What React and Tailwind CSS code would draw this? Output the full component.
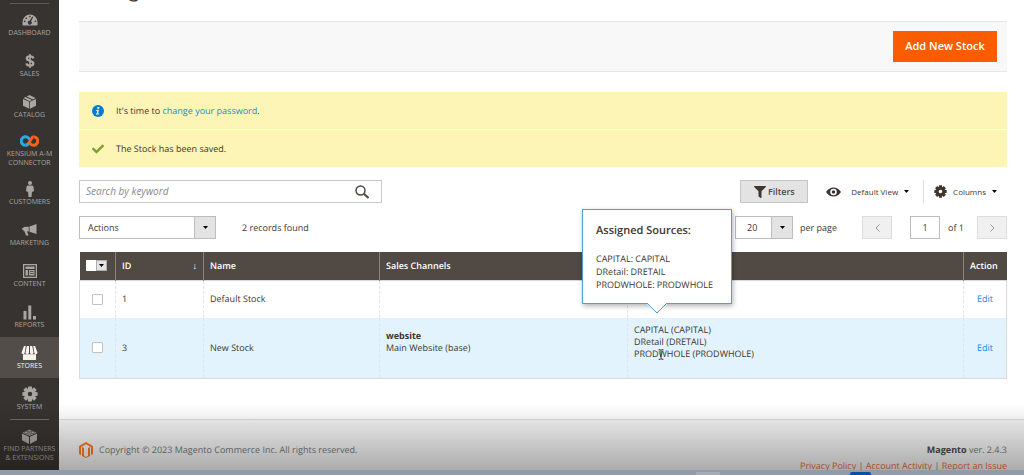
import { useState } from "react"
import { FaFilter, FaCheck } from "react-icons/fa"

const TEETH = [0, 45, 90, 135, 180, 225, 270, 315]

const Gear = ({ className }) => (
  <svg viewBox="0 0 20 20" className={className} fill="currentColor" aria-hidden="true">
    {TEETH.map((deg) => (
      <path key={deg} d="M7.700 0.500h4.600l.5 5.500h-5.600z" transform={`rotate(${deg} 10 10)`} />
    ))}
    <path fillRule="evenodd" d="M10 3a7 7 0 1 0 0 14a7 7 0 0 0 0-14zm0 4.200a2.800 2.800 0 1 1 0 5.600a2.800 2.800 0 0 1 0-5.600z" />
  </svg>
)

const DashboardIcon = () => (
  <svg viewBox="0 0 32 24" className="h-3 w-4" fill="currentColor" aria-hidden="true">
    <path fillRule="evenodd" d="M16 1A15 15 0 0 0 1 16v6q0 1 1 1h28q1 0 1-1v-6A15 15 0 0 0 16 1zM7 14.500a1.700 1.700 0 1 1-3.400 0a1.700 1.700 0 0 1 3.400 0zM10 8.500a1.700 1.700 0 1 1-3.400 0a1.700 1.700 0 0 1 3.400 0zM17.500 5a1.600 1.600 0 1 1-3.200 0a1.600 1.600 0 0 1 3.200 0zM28.500 14.500a1.700 1.700 0 1 1-3.400 0a1.700 1.700 0 0 1 3.400 0zM22.500 6l-4.500 8.500a3.800 3.800 0 1 1-3-.800L21 5.200z" />
  </svg>
)

const DollarIcon = () => (
  <svg viewBox="0 0 16 24" className="h-[14px] w-[10px]" fill="none" stroke="currentColor" strokeWidth="4" aria-hidden="true">
    <path d="M14 7.500C13 4.500 10.500 4 8 4C4.500 4 2.500 5.600 2.500 7.800C2.500 13 13.700 10.500 13.700 16C13.700 18.600 11.500 20 8 20C5 20 2.500 19 2 16" />
    <path d="M8 0v24" strokeWidth="2.600" />
  </svg>
)

const BoxIcon = () => (
  <svg viewBox="0 0 26 28" className="h-[14px] w-[13px]" fill="currentColor" aria-hidden="true">
    <path d="M12.500 13.500v14L0 21.500V8z" />
    <path d="M14 13.500v14l12-6V8z" />
    <path d="M1 6l4.500-2.200L18 10L13 12.300zM7.500 3L13 0l12 6l-5 3z" />
  </svg>
)

const ConnectorIcon = () => (
  <svg viewBox="0 0 38 24" className="h-3 w-[19px]" fill="none" strokeWidth="6" aria-hidden="true">
    <path d="M27 3.500a8.500 8.500 0 1 1-6 14.500L17 14" stroke="#f26322" />
    <path d="M11 20.500A8.500 8.500 0 1 1 17 6l4 4" stroke="#29abe2" />
    <path d="M11 20.500c6 0 6-4 9-8.500s4-8.500 7-8.500" stroke="#f26322" />
    <path d="M11 20.500c3 0 5-1.500 6.500-4" stroke="#29abe2" />
  </svg>
)

const CustomerIcon = () => (
  <svg viewBox="0 0 16 32" className="h-4 w-2" fill="currentColor" aria-hidden="true">
    <circle cx="8" cy="4" r="4" />
    <path d="M4 9h8q3 0 3 3l1 8l-3 2l-1-2l-1 12H5L4 20l-1 2l-3-2l1-8q0-3 3-3z" />
  </svg>
)

const MarketingIcon = () => (
  <svg viewBox="0 0 30 24" className="h-3 w-[15px]" fill="currentColor" aria-hidden="true">
    <path d="M29 0v20L15 15.500V5zM13.500 5.500v9.500L10 14.500l3 8.500H8L5 14.500H3V12L0 11V8.500L3 8V6z" />
  </svg>
)

const ContentIcon = () => (
  <svg viewBox="0 0 28 28" className="size-[14px]" fill="currentColor" aria-hidden="true">
    <path fillRule="evenodd" d="M0 0h28v28H0zM2.500 2.500v23h23v-23z" />
    <path d="M5 5h18v5H5zM5 12h5v11H5zM12 12h11v11H12z" />
    <path d="M14 15h7M14 19h7" stroke="#373330" strokeWidth="1.500" />
  </svg>
)

const ReportsIcon = () => (
  <svg viewBox="0 0 28 30" className="h-[15px] w-[14px]" fill="currentColor" aria-hidden="true">
    <path d="M1 12h6v17H1zM10.500 1h6v28h-6zM20 22h6v7h-6z" />
  </svg>
)

const StoresIcon = () => (
  <svg viewBox="0 0 34 28" className="h-[14px] w-[17px]" fill="currentColor" aria-hidden="true">
    <path d="M6 0h3.500L7.500 13a3.200 3.200 0 0 1-6.500 0zM11.500 0h4.500v13a3.500 3.500 0 0 1-7 0zM18 0h4.500L25 13a3.500 3.500 0 0 1-7 0zM24.500 0H28l5 13a3.200 3.200 0 0 1-6.500 0z" />
    <path d="M4 16.500h26V28H4z" />
  </svg>
)

const PartnersIcon = () => (
  <svg viewBox="0 0 30 30" className="size-[15px]" fill="currentColor" aria-hidden="true">
    <path d="M0 9l14 6.500V30L0 22.500zM30 9l-14 6.500V30l14-7.500z" />
    <path d="M15 1l14 6.500L15 14L1 7.500z" />
    <g fill="currentColor" stroke="#2c2926" strokeWidth="1">
      <ellipse cx="15" cy="3.500" rx="3.600" ry="2.200" />
      <ellipse cx="8.500" cy="6.800" rx="3.600" ry="2.200" />
      <ellipse cx="21.500" cy="6.800" rx="3.600" ry="2.200" />
      <ellipse cx="15" cy="10" rx="3.600" ry="2.200" />
    </g>
  </svg>
)

const MagentoLogo = () => (
  <svg viewBox="0 0 28 32" className="h-4 w-[14px] shrink-0" fill="#ff7a20" role="img" aria-label="Magento">
    <path d="M14 0l14 8v16l-4 2.300V10.500L14 4.700L4 10.500v15.800L0 24V8z" />
    <path d="M10 11.800v15.900l4 2.300l4-2.300V11.800l4-2v18L14 32l-8-4.200v-18z" fillRule="evenodd" />
  </svg>
)

const Caret = () => (
  <svg viewBox="0 0 10 6" className="h-[3px] w-[5px]" aria-hidden="true">
    <path d="M0 0h10L5 6z" fill="#000" />
  </svg>
)

const menu = [
  { label: ["DASHBOARD"], icon: <DashboardIcon /> },
  { label: ["SALES"], icon: <DollarIcon /> },
  { label: ["CATALOG"], icon: <BoxIcon /> },
  { label: ["KENSIUM A-M", "CONNECTOR"], icon: <ConnectorIcon />, height: "h-[46px]" },
  { label: ["CUSTOMERS"], icon: <CustomerIcon /> },
  { label: ["MARKETING"], icon: <MarketingIcon /> },
  { label: ["CONTENT"], icon: <ContentIcon /> },
  { label: ["REPORTS"], icon: <ReportsIcon /> },
  { label: ["STORES"], icon: <StoresIcon />, active: true },
  { label: ["SYSTEM"], icon: <Gear className="size-4" /> },
  { label: ["FIND PARTNERS", "& EXTENSIONS"], icon: <PartnersIcon />, height: "h-[50px]", divider: true },
]

const Sidebar = () => (
  <nav className="flex w-[59px] shrink-0 flex-col bg-[#373330] pt-[3px]">
    <hr className="mx-2.5 border-[#5f5a56]" />
    {menu.map((item) => (
      <div key={item.label[0]}>
        {item.divider && <hr className="mx-2.5 border-[#6f6a66]" />}
        <a
          href="#"
          className={`flex flex-col items-center justify-center whitespace-nowrap text-[7px] leading-[9px] ${item.height || "h-[41px]"} ${item.active ? "bg-[#524d49] text-[#f7f3eb]" : "text-[#aaa6a0]"}`}
        >
          <span className="flex h-[18px] items-center">{item.icon}</span>
          {item.label.map((line) => (
            <span key={line}>{line}</span>
          ))}
        </a>
      </div>
    ))}
  </nav>
)

const Messages = () => (
  <div className="mt-5 flex flex-col gap-px">
    <div className="flex h-[37px] items-center bg-[#fdf5b5] pl-[13px]">
      <svg viewBox="0 0 24 24" className="size-3" aria-hidden="true">
        <circle cx="12" cy="12" r="12" fill="#007bdb" />
        <path d="M11 4h4l-.7 3.500h-4zM8.500 9.500h5.300L12.300 17h2l-.4 2H7.800l.4-2h1.300l1.100-5.500H8.200z" fill="#fdf5b5" />
      </svg>
      <p className="ml-3">It&apos;s time to <a href="#" className="text-[#1489dc]">change your password</a>.</p>
    </div>
    <div className="flex h-[37px] items-center bg-[#fdf5b5] pl-[13px]">
      <FaCheck className="size-3 text-[#79a22e]" aria-hidden="true" />
      <p className="ml-3">The Stock has been saved.</p>
    </div>
  </div>
)

const Toolbar = () => {
  const [keyword, setKeyword] = useState("")
  return (
    <>
      <div className="mt-[13px] flex h-[23px] items-stretch justify-between">
        <div className="flex w-[303px] items-center border border-[#c8c8c8] pr-3">
          <input
            type="text"
            aria-label="Search by keyword"
            placeholder="Search by keyword"
            value={keyword}
            onChange={(e) => setKeyword(e.target.value)}
            className="min-w-0 flex-1 pl-1.5 text-[10px] outline-none placeholder:italic placeholder:text-[#8a8a8a]"
          />
          <button type="button" aria-label="Search">
            <svg viewBox="0 0 28 28" className="size-[14px]" fill="none" stroke="#514943" aria-hidden="true">
              <circle cx="11" cy="11" r="9" strokeWidth="3" />
              <path d="M17.500 17.500L27 26" strokeWidth="4" />
            </svg>
          </button>
        </div>
        <div className="flex items-center text-[8px]">
          <button type="button" className="flex h-full w-[68px] items-center justify-center gap-0.5 border border-[#c4c4c4] bg-[#e3e3e3] text-[9px] font-semibold text-[#514943]">
            <FaFilter className="size-3 text-[#41362f]" aria-hidden="true" />
            Filters
          </button>
          <button type="button" className="ml-[18px] flex items-center">
            <svg viewBox="0 0 30 20" className="h-2.5 w-[15px] text-[#41362f]" aria-hidden="true">
              <path fillRule="evenodd" fill="currentColor" d="M0 10Q6 1 15 1t15 9q-6 9-15 9T0 10zM15 3.500a6.500 6.500 0 1 0 0 13a6.500 6.500 0 0 0 0-13zM15 6.500a3.500 3.500 0 1 1 0 7a3.500 3.500 0 0 1 0-7z" />
            </svg>
            <span className="ml-2.5 mr-1.5">Default View</span>
            <Caret />
          </button>
          <button type="button" className="ml-3.5 flex h-full items-center border-l border-[#dedede] pl-2.5 pr-2.5">
            <Gear className="size-[13px] text-[#41362f]" />
            <span className="mx-1.5">Columns</span>
            <Caret />
          </button>
        </div>
      </div>

      <div className="mt-[13px] flex h-[23px] items-stretch justify-between">
        <div className="flex items-stretch">
          <div className="flex w-[137px] border border-[#bdbdbd]">
            <select aria-label="Actions" className="min-w-0 flex-1 appearance-none pl-2 outline-none">
              <option>Actions</option>
              <option>Delete</option>
            </select>
            <span className="flex w-[21px] items-center justify-center border-l border-[#bdbdbd] bg-[#e3e3e3]"><Caret /></span>
          </div>
          <p className="ml-[26px] self-center">2 records found</p>
        </div>
        <div className="flex items-stretch">
          <div className="flex w-[58px] border border-[#bdbdbd]">
            <select aria-label="Records per page" className="min-w-0 flex-1 appearance-none pl-[11px] outline-none">
              <option>20</option>
              <option>30</option>
              <option>50</option>
            </select>
            <span className="flex w-[21px] items-center justify-center border-l border-[#bdbdbd] bg-[#e3e3e3]"><Caret /></span>
          </div>
          <span className="ml-[7px] w-[62px] self-center">per page</span>
          <button type="button" aria-label="Previous page" className="flex w-[30px] items-center justify-center border border-[#dcdcdc] bg-[#f0f0f0]">
            <svg viewBox="0 0 10 16" className="h-2 w-[5px]" fill="none" stroke="#9b9793" strokeWidth="2" aria-hidden="true"><path d="M9 1L2 8l7 7" /></svg>
          </button>
          <input type="text" aria-label="Page" defaultValue="1" className="ml-[18px] w-[30px] border border-[#bdbdbd] text-center outline-none" />
          <span className="ml-2 w-[29px] self-center">of 1</span>
          <button type="button" aria-label="Next page" className="flex w-[30px] items-center justify-center border border-[#dcdcdc] bg-[#f0f0f0]">
            <svg viewBox="0 0 10 16" className="h-2 w-[5px]" fill="none" stroke="#9b9793" strokeWidth="2" aria-hidden="true"><path d="M1 1l7 7l-7 7" /></svg>
          </button>
        </div>
      </div>
    </>
  )
}

const SourcesTooltip = () => (
  <div role="tooltip" className="absolute bottom-full -left-[52px] z-10 mb-5 h-[95px] w-[150px] whitespace-nowrap border border-[#4ba3d0] bg-white pl-[13px] pt-3 shadow-[1px_2px_5px_rgba(0,0,0,0.3)]">
    <p className="text-[11px] font-semibold leading-[18px]">Assigned Sources:</p>
    <ul className="mt-3 leading-[13px]">
      <li>CAPITAL: CAPITAL</li>
      <li>DRetail: DRETAIL</li>
      <li>PRODWHOLE: PRODWHOLE</li>
    </ul>
    <svg viewBox="0 0 20 11" className="absolute top-full left-[64px] h-[11px] w-5" aria-hidden="true">
      <path d="M0 0h20v1L10 10L0 1z" fill="#fff" />
      <path d="M0 0l10 10l10-10" fill="none" stroke="#4ba3d0" />
    </svg>
  </div>
)

const th = "border-r border-[#8a837f] px-1.5 text-left font-semibold last:border-r-0"
const td = "border-r border-dashed border-r-[#e4e4e4] px-1.5 last:border-r-0"
const box = "block size-[11px] appearance-none rounded-[1px] border border-[#c4c0bc] bg-white"

const StockGrid = () => (
  <table className="mt-[13px] w-full table-fixed border-collapse leading-3">
    <colgroup>
      <col className="w-9" />
      <col className="w-[88px]" />
      <col className="w-[176px]" />
      <col className="w-[248px]" />
      <col />
      <col className="w-[43px]" />
    </colgroup>
    <thead>
      <tr className="h-7 bg-[#514943] text-white">
        <th className={th}>
          <div className="flex h-[11px] w-[21px] bg-white">
            <input type="checkbox" aria-label="Select all" className="w-2.5 appearance-none" />
            <button type="button" aria-label="Selection options" className="flex flex-1 items-center justify-center border border-[#adadad] bg-[#e3e3e3]"><Caret /></button>
          </div>
        </th>
        <th className={th}>
          <div className="flex justify-between"><span>ID</span><span>↓</span></div>
        </th>
        <th className={th}>Name</th>
        <th className={th}>Sales Channels</th>
        <th className={th} aria-label="Assigned Sources"></th>
        <th className={th}>Action</th>
      </tr>
    </thead>
    <tbody className="border border-[#d9d9d9]">
      <tr className="h-[38px]">
        <td className={td}><div className="flex justify-center"><input type="checkbox" aria-label="Select Default Stock" className={box} /></div></td>
        <td className={td}>1</td>
        <td className={td}>Default Stock</td>
        <td className={td}></td>
        <td className={td}></td>
        <td className={`${td} text-center`}><a href="#" className="text-[#1489dc]">Edit</a></td>
      </tr>
      <tr className="h-[60px] bg-[#e2f3fe]">
        <td className={td}><div className="flex justify-center"><input type="checkbox" aria-label="Select New Stock" className={box} /></div></td>
        <td className={td}>3</td>
        <td className={td}>New Stock</td>
        <td className={td}>
          <div className="pb-3">
            <p className="font-bold">website</p>
            <p>Main Website (base)</p>
          </div>
        </td>
        <td className={td}>
          <div className="relative pb-3">
            <p>CAPITAL (CAPITAL)</p>
            <p>DRetail (DRETAIL)</p>
            <p>PRODWHOLE (PRODWHOLE)</p>
            <SourcesTooltip />
            {/* text cursor */}
            <svg viewBox="0 0 10 18" className="absolute bottom-3 left-6 h-[11px] w-1.5" fill="none" stroke="#222" strokeWidth="1.500" aria-hidden="true">
              <path d="M1 1h3l1 1l1-1h3M5 2v14M1 17h3l1-1l1 1h3" />
            </svg>
          </div>
        </td>
        <td className={`${td} text-center`}><a href="#" className="text-[#1489dc]">Edit</a></td>
      </tr>
    </tbody>
  </table>
)

const Footer = () => (
  <footer className="mt-auto flex h-[51px] shrink-0 justify-between overflow-hidden border-t border-[#dcdcdc] bg-[#f5f5f5] pl-5 pr-[17px] text-[#777]">
    <div className="mt-[22px] flex h-4 items-center gap-1.5">
      <MagentoLogo />
      <p>Copyright © 2023 Magento Commerce Inc. All rights reserved.</p>
    </div>
    <div className="mt-[22px] text-right leading-4">
      <p><strong className="text-[#514943]">Magento</strong> ver. 2.4.3</p>
      <p>
        <a href="#" className="text-[#f0692f]">Privacy Policy</a> | <a href="#" className="text-[#f0692f]">Account Activity</a> | <a href="#" className="text-[#f0692f]">Report an Issue</a>
      </p>
    </div>
  </footer>
)

export default function App() {
  return (
    <div className="relative flex h-screen flex-col overflow-hidden bg-white font-['Open_Sans',sans-serif] text-[9px] text-[#41362f] [text-rendering:geometricPrecision]">
      <div className="flex min-h-0 flex-1 overflow-hidden">
        <Sidebar />
        <div className="flex min-w-0 flex-1 flex-col">
          <main className="pl-5 pr-[17px]">
            <h1 className="-mt-[22px] h-[43px] text-[19px] leading-6">Manage Stock</h1>
            <div className="flex h-[51px] items-center justify-end border-y border-[#e6e6e6] bg-[#f8f8f8] pr-2.5">
              <button type="button" className="h-[31px] w-[104px] bg-[#fa5d00] text-[11px] font-semibold text-white">Add New Stock</button>
            </div>
            <Messages />
            <Toolbar />
            <StockGrid />
          </main>
          <Footer />
        </div>
      </div>
      {/* shade above the taskbar */}
      <div className="pointer-events-none absolute inset-x-0 bottom-[5px] h-[66px] bg-linear-to-b from-transparent to-black/30"></div>
      <div className="flex h-[5px] shrink-0 items-end bg-[#929baa]">
        <div className="ml-[68%] h-[3px] w-6 bg-[#a4acb8]"></div>
        <div className="ml-[130px] h-[3px] w-[21px] rounded-t-xs bg-[#0a4fa0]"></div>
      </div>
    </div>
  )
}
